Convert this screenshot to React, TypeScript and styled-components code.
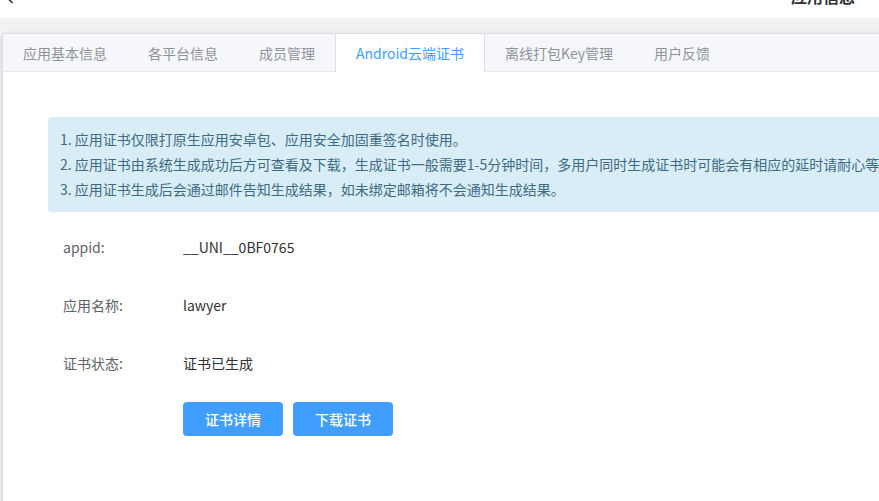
import React, { useState } from 'react';
import styled, { createGlobalStyle } from 'styled-components';

const GlobalStyle = createGlobalStyle`
  html, body {
    margin: 0;
    padding: 0;
    background: #f2f2f2;
    overflow: hidden;
    font-family: "Noto Sans CJK SC", "Noto Sans", sans-serif;
  }
`;

const Page = styled.div`
  width: 879px;
  height: 501px;
  display: flex;
  flex-direction: column;
  overflow: hidden;
`;

const TopBar = styled.div`
  height: 18px;
  flex-shrink: 0;
  background: #ffffff;
  display: flex;
  justify-content: space-between;
  align-items: flex-start;
  overflow: hidden;
  padding: 0 24px 0 6px;
`;

const BackIcon = styled.svg`
  width: 8px;
  height: 12px;
  margin-top: -8px;
`;

const PageTitle = styled.div`
  font-size: 16px;
  line-height: 16px;
  font-weight: 700;
  color: #303133;
  margin-top: -12px;
`;

const Body = styled.div`
  flex-shrink: 0;
  padding: 15px 0 0 2px;
`;

const Card = styled.div`
  width: 1100px;
  height: 620px;
  background: #ffffff;
  border: 1px solid #dcdfe6;
  box-shadow: 0 2px 4px rgba(0, 0, 0, 0.12), 0 0 6px rgba(0, 0, 0, 0.04);
  box-sizing: border-box;
`;

const TabHeader = styled.div`
  display: flex;
  height: 38px;
  background: #f5f7fa;
  border-bottom: 1px solid #e4e7ed;
  box-sizing: border-box;
`;

const Tab = styled.div<{ $active?: boolean }>`
  padding: 0 20px;
  height: ${p => (p.$active ? '38px' : '37px')};
  line-height: 38px;
  font-size: 14px;
  color: ${p => (p.$active ? '#409eff' : '#909399')};
  background: ${p => (p.$active ? '#ffffff' : 'transparent')};
  border-left: 1px solid ${p => (p.$active ? '#dcdfe6' : 'transparent')};
  border-right: 1px solid ${p => (p.$active ? '#dcdfe6' : 'transparent')};
  margin-left: -1px;
  cursor: pointer;
  white-space: nowrap;
  box-sizing: border-box;
`;

const Content = styled.div`
  padding: 45px 0 0 45px;
`;

const Notice = styled.div`
  background: #d9edf7;
  border-radius: 4px;
  padding: 10px 12px;
  color: #3d6b84;
  font-size: 14px;
  line-height: 25px;
  white-space: nowrap;
`;

const InfoList = styled.div`
  margin-top: 6px;
`;

const InfoRow = styled.div`
  display: flex;
  align-items: center;
  height: 58px;
  font-size: 14px;
`;

const Label = styled.div`
  width: 135px;
  padding-left: 15px;
  box-sizing: border-box;
  color: #606266;
`;

const Value = styled.div`
  color: #303133;
`;

const Actions = styled.div`
  display: flex;
  gap: 10px;
  margin-top: 10px;
  padding-left: 135px;
`;

const Button = styled.button`
  width: 100px;
  height: 34px;
  border: none;
  border-radius: 4px;
  background: #409eff;
  color: #ffffff;
  font-family: inherit;
  font-size: 14px;
  font-weight: 500;
  cursor: pointer;
  &:hover {
    background: #66b1ff;
  }
`;

const tabs = ['应用基本信息', '各平台信息', '成员管理', 'Android云端证书', '离线打包Key管理', '用户反馈'];

const notices = [
  '1. 应用证书仅限打原生应用安卓包、应用安全加固重签名时使用。',
  '2. 应用证书由系统生成成功后方可查看及下载，生成证书一般需要1-5分钟时间，多用户同时生成证书时可能会有相应的延时请耐心等待。',
  '3. 应用证书生成后会通过邮件告知生成结果，如未绑定邮箱将不会通知生成结果。',
];

const info = [
  { label: 'appid:', value: '__UNI__0BF0765' },
  { label: '应用名称:', value: 'lawyer' },
  { label: '证书状态:', value: '证书已生成' },
];

export default function App() {
  const [active, setActive] = useState(3);

  return (
    <Page>
      <GlobalStyle />
      <TopBar>
        <BackIcon viewBox="0 0 8 12">
          <path d="M6.5 1 L1.5 6 L6.5 11" fill="none" stroke="#303133" strokeWidth="1.6" />
        </BackIcon>
        <PageTitle>应用信息</PageTitle>
      </TopBar>
      <Body>
        <Card>
          <TabHeader>
            {tabs.map((t, i) => (
              <Tab key={t} $active={i === active} onClick={() => setActive(i)}>
                {t}
              </Tab>
            ))}
          </TabHeader>
          <Content>
            <Notice>
              {notices.map(n => (
                <div key={n}>{n}</div>
              ))}
            </Notice>
            <InfoList>
              {info.map(row => (
                <InfoRow key={row.label}>
                  <Label>{row.label}</Label>
                  <Value>{row.value}</Value>
                </InfoRow>
              ))}
            </InfoList>
            <Actions>
              <Button>证书详情</Button>
              <Button>下载证书</Button>
            </Actions>
          </Content>
        </Card>
      </Body>
    </Page>
  );
}
